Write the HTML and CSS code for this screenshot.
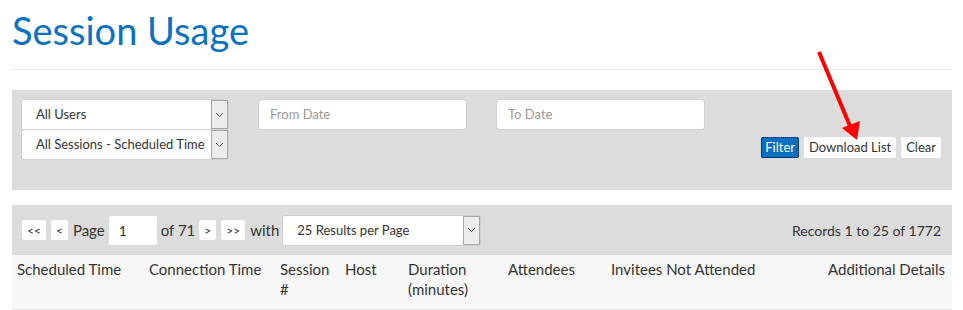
FILE: index.html
```html
<!DOCTYPE html>
<html lang="en">
<head>
    <meta charset="UTF-8">
    <meta name="viewport" content="width=device-width, initial-scale=1.0">
    <title>Session Usage</title>
    <link rel="stylesheet" href="styles.css">
</head>
<body>
    <div class="page">
        <h1 class="title">Session Usage</h1>
        <hr class="rule">

        <!-- filtros -->
        <div class="filter-panel">
            <div class="filter-fields">
                <div class="select-stack">
                    <div class="select">
                        <span class="select-text">All Users</span>
                        <span class="select-arrow"><svg width="9" height="6" viewBox="0 0 9 6"><path d="M1 1l3.5 3.5L8 1" fill="none" stroke="#555" stroke-width="1"/></svg></span>
                    </div>
                    <div class="select">
                        <span class="select-text">All Sessions - Scheduled Time</span>
                        <span class="select-arrow"><svg width="9" height="6" viewBox="0 0 9 6"><path d="M1 1l3.5 3.5L8 1" fill="none" stroke="#555" stroke-width="1"/></svg></span>
                    </div>
                </div>
                <div class="date-input">From Date</div>
                <div class="date-input">To Date</div>
            </div>
            <div class="filter-buttons">
                <button class="btn btn-primary">Filter</button>
                <button class="btn">Download List</button>
                <button class="btn">Clear</button>
            </div>
        </div>

        <!-- paginacao -->
        <div class="pager">
            <div class="pager-left">
                <button class="btn-small">&lt;&lt;</button>
                <button class="btn-small">&lt;</button>
                <span class="pager-label">Page</span>
                <div class="page-input">1</div>
                <span class="pager-label">of 71</span>
                <button class="btn-small">&gt;</button>
                <button class="btn-small">&gt;&gt;</button>
                <span class="pager-label">with</span>
                <div class="select select-pager">
                    <span class="select-text">25 Results per Page</span>
                    <span class="select-arrow"><svg width="9" height="6" viewBox="0 0 9 6"><path d="M1 1l3.5 3.5L8 1" fill="none" stroke="#555" stroke-width="1"/></svg></span>
                </div>
            </div>
            <div class="records">Records 1 to 25 of 1772</div>
        </div>

        <table class="sessions">
            <colgroup>
                <col style="width:132px">
                <col style="width:131px">
                <col style="width:65px">
                <col style="width:63px">
                <col style="width:100px">
                <col style="width:103px">
                <col style="width:194px">
                <col>
            </colgroup>
            <thead>
                <tr>
                    <th>Scheduled Time</th>
                    <th>Connection Time</th>
                    <th>Session #</th>
                    <th>Host</th>
                    <th>Duration (minutes)</th>
                    <th>Attendees</th>
                    <th>Invitees Not Attended</th>
                    <th class="right">Additional Details</th>
                </tr>
            </thead>
        </table>

        <!-- seta de destaque -->
        <svg class="callout-arrow" width="963" height="310" viewBox="0 0 963 310">
            <line x1="819" y1="52" x2="850" y2="126" stroke="#f00" stroke-width="4"/>
            <polygon points="842,128 860,121 857,140" fill="#f00"/>
        </svg>
    </div>
</body>
</html>
```

FILE: styles.css
```css
body {
    margin: 0;
    background-color: #fff;
    color: #333;
    font-family: Lato, "Open Sans", Arial, sans-serif;
}
.page {
    padding: 0 11px 0 12px;
}
.title {
    margin: 0;
    padding-top: 7px;
    font-size: 38px;
    font-weight: 400;
    line-height: 47px;
    color: #0a72bf;
}
.rule {
    margin: 15px 0 20px;
    border: none;
    border-top: 1px solid #e8e8e8;
}

/* painel de filtros */
.filter-panel {
    display: flex;
    justify-content: space-between;
    height: 100px;
    box-sizing: border-box;
    padding: 10px 11px 10px 10px;
    background-color: #dcdcdc;
}
.filter-fields {
    display: flex;
    gap: 31px;
    align-items: flex-start;
}
.select-stack {
    display: flex;
    flex-direction: column;
    gap: 1px;
}
.select {
    display: flex;
    width: 206px;
    height: 29px;
    box-sizing: border-box;
    background-color: #fff;
    border-radius: 2px;
    box-shadow: 0 0 0 1px #d0d0d0;
    font-size: 13px;
}
.select-text {
    flex: 1;
    padding-left: 14px;
    line-height: 29px;
    white-space: nowrap;
}
.select-arrow {
    display: flex;
    align-items: center;
    justify-content: center;
    width: 17px;
    box-sizing: border-box;
    border: 1px solid #a8a8a8;
    background-color: #ececec;
}
.date-input {
    width: 207px;
    height: 29px;
    box-sizing: border-box;
    padding-left: 11px;
    line-height: 29px;
    background-color: #fff;
    border-radius: 3px;
    box-shadow: 0 0 0 1px #d0d0d0;
    color: #999;
    font-size: 13px;
}
.filter-buttons {
    display: flex;
    gap: 5px;
    padding-top: 37px;
    align-items: flex-start;
}
.btn {
    height: 21px;
    padding: 0 5px;
    border: none;
    border-radius: 2px;
    background-color: #fff;
    color: #333;
    font-family: inherit;
    font-size: 13px;
    line-height: 21px;
}
.btn-primary {
    background-color: #0a6fbf;
    color: #fff;
    outline: 1px dotted #000;
    outline-offset: -1px;
    padding: 0 4px;
}

/* paginacao */
.pager {
    display: flex;
    justify-content: space-between;
    align-items: center;
    height: 50px;
    box-sizing: border-box;
    margin-top: 15px;
    padding: 0 11px 0 10px;
    background-color: #dcdcdc;
    font-size: 15px;
}
.pager-left {
    display: flex;
    align-items: center;
    gap: 4px;
}
.btn-small {
    height: 20px;
    padding: 0 5px;
    margin-right: 1px;
    border: none;
    border-radius: 2px;
    background-color: #fff;
    color: #333;
    font-family: inherit;
    font-size: 12px;
}
.page-input {
    width: 48px;
    height: 29px;
    box-sizing: border-box;
    padding-left: 10px;
    line-height: 29px;
    background-color: #fff;
    border-radius: 2px;
    font-size: 14px;
}
.select-pager {
    width: 197px;
    font-size: 13px;
}
.records {
    font-size: 14px;
}

/* tabela */
.sessions {
    width: 100%;
    table-layout: fixed;
    border-collapse: collapse;
    background-color: #f7f7f7;
    border-bottom: 2px solid #e2e2e2;
}
.sessions th {
    height: 50px;
    padding: 4px 5px 0;
    vertical-align: top;
    text-align: left;
    font-weight: 400;
    font-size: 15px;
    line-height: 20px;
}
.sessions th.right {
    text-align: right;
    padding-right: 7px;
}
.callout-arrow {
    position: absolute;
    top: 0;
    left: 0;
    pointer-events: none;
}
```
